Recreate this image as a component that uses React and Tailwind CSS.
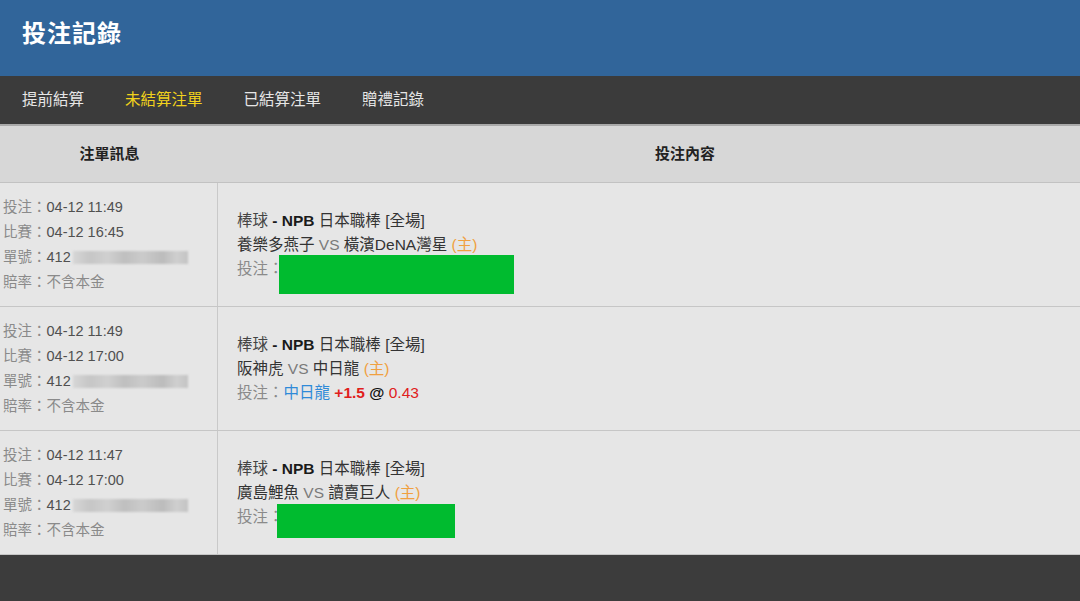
import React from "react";

// 投注記錄 — 未結算注單 list
const tabs = [
  { label: "提前結算", active: false },
  { label: "未結算注單", active: true },
  { label: "已結算注單", active: false },
  { label: "贈禮記錄", active: false },
];

const bets = [
  {
    placed: "04-12 11:49",
    match: "04-12 16:45",
    home: "養樂多燕子",
    away: "橫濱DeNA灣星",
    hidden: { left: 42, top: -2, w: 235, h: 39 },
  },
  {
    placed: "04-12 11:49",
    match: "04-12 17:00",
    home: "阪神虎",
    away: "中日龍",
    pick: { team: "中日龍", line: "+1.5", odds: "0.43" },
  },
  {
    placed: "04-12 11:47",
    match: "04-12 17:00",
    home: "廣島鯉魚",
    away: "讀賣巨人",
    hidden: { left: 40, top: -1, w: 178, h: 34 },
  },
];

function BlurredId() {
  return (
    <span className="inline-block align-middle ml-[2px] w-[115px] h-[13px] bg-[linear-gradient(90deg,#d6d6d6_0%,#c6c6c6_15%,#d0d0d0_30%,#bfbfbf_45%,#cbcbcb_60%,#bcbcbc_78%,#cfcfcf_90%,#c4c4c4_100%)] blur-[0.8px]" />
  );
}

function InfoCell({ bet }) {
  const rows = [
    ["投注", bet.placed],
    ["比賽", bet.match],
  ];
  return (
    <div className="w-[218px] shrink-0 flex flex-col justify-center pl-[3px] text-[14.5px] leading-[25px] border-r border-[#c9c9c9]">
      {rows.map(([k, v]) => (
        <div key={k}>
          <span className="text-[#8a8a8a]">{k}：</span>
          <span className="text-[#505050]">{v}</span>
        </div>
      ))}
      <div>
        <span className="text-[#8a8a8a]">單號：</span>
        <span className="text-[#505050]">412</span>
        <BlurredId />
      </div>
      <div className="text-[#8a8a8a]">賠率：不含本金</div>
    </div>
  );
}

function ContentCell({ bet }) {
  return (
    <div className="flex-1 flex flex-col justify-center pl-[19px] text-[15.5px] leading-[24px] text-[#333]">
      <div>
        <span className="text-[#444]">棒球</span>
        <span className="text-[#1a1a1a] font-bold"> - NPB </span>
        <span>日本職棒 [全場]</span>
      </div>
      <div>
        {bet.home} <span className="text-[#7a7a7a]">VS</span> {bet.away}{" "}
        <span className="text-[#f0a040]">(主)</span>
      </div>
      <div className="relative">
        <span className="text-[#8a8a8a]">投注：</span>
        {bet.pick && (
          <>
            <span className="text-[#2f8ad8]">{bet.pick.team}</span>{" "}
            <span className="text-[#e0201c] font-bold">{bet.pick.line}</span>{" "}
            <span className="text-[#111] font-bold">@</span>{" "}
            <span className="text-[#e0201c]">{bet.pick.odds}</span>
          </>
        )}
        {bet.hidden && (
          <div
            className="absolute bg-[#00bb2f]"
            style={{
              left: bet.hidden.left,
              top: bet.hidden.top,
              width: bet.hidden.w,
              height: bet.hidden.h,
            }}
          />
        )}
      </div>
    </div>
  );
}

export default function App() {
  return (
    <div
      className="w-[1080px] h-[601px] overflow-hidden flex flex-col bg-[#3c3c3c]"
      style={{ fontFamily: '"Liberation Sans", "Noto Sans CJK TC", sans-serif' }}
    >
      <header className="h-[76px] shrink-0 bg-[#31659a] flex items-center pl-[22px] pb-[8px]">
        <h1 className="text-white text-[24px] font-bold tracking-[1px]">投注記錄</h1>
      </header>

      <nav className="h-[48px] shrink-0 bg-[#3b3b3b] flex items-center gap-[41px] pl-[22px] text-[15.5px]">
        {tabs.map((t) => (
          <span key={t.label} className={t.active ? "text-[#f2d21c]" : "text-[#e6e6e6]"}>
            {t.label}
          </span>
        ))}
      </nav>

      <div className="h-[2px] shrink-0 bg-[#a9a9a9]" />

      <div className="h-[57px] shrink-0 bg-[#d7d7d7] flex border-b border-[#c2c2c2] text-[15px] font-bold text-[#222]">
        <div className="w-[219px] shrink-0 flex items-center justify-center">注單訊息</div>
        <div className="flex-1 flex items-center justify-center pl-[71px]">投注內容</div>
      </div>

      {bets.map((bet, i) => (
        <div key={i} className="h-[124px] shrink-0 flex bg-[#e6e6e6] border-b border-[#c6c6c6]">
          <InfoCell bet={bet} />
          <ContentCell bet={bet} />
        </div>
      ))}

      <div className="flex-1 bg-[#3c3c3c]" />
    </div>
  );
}
